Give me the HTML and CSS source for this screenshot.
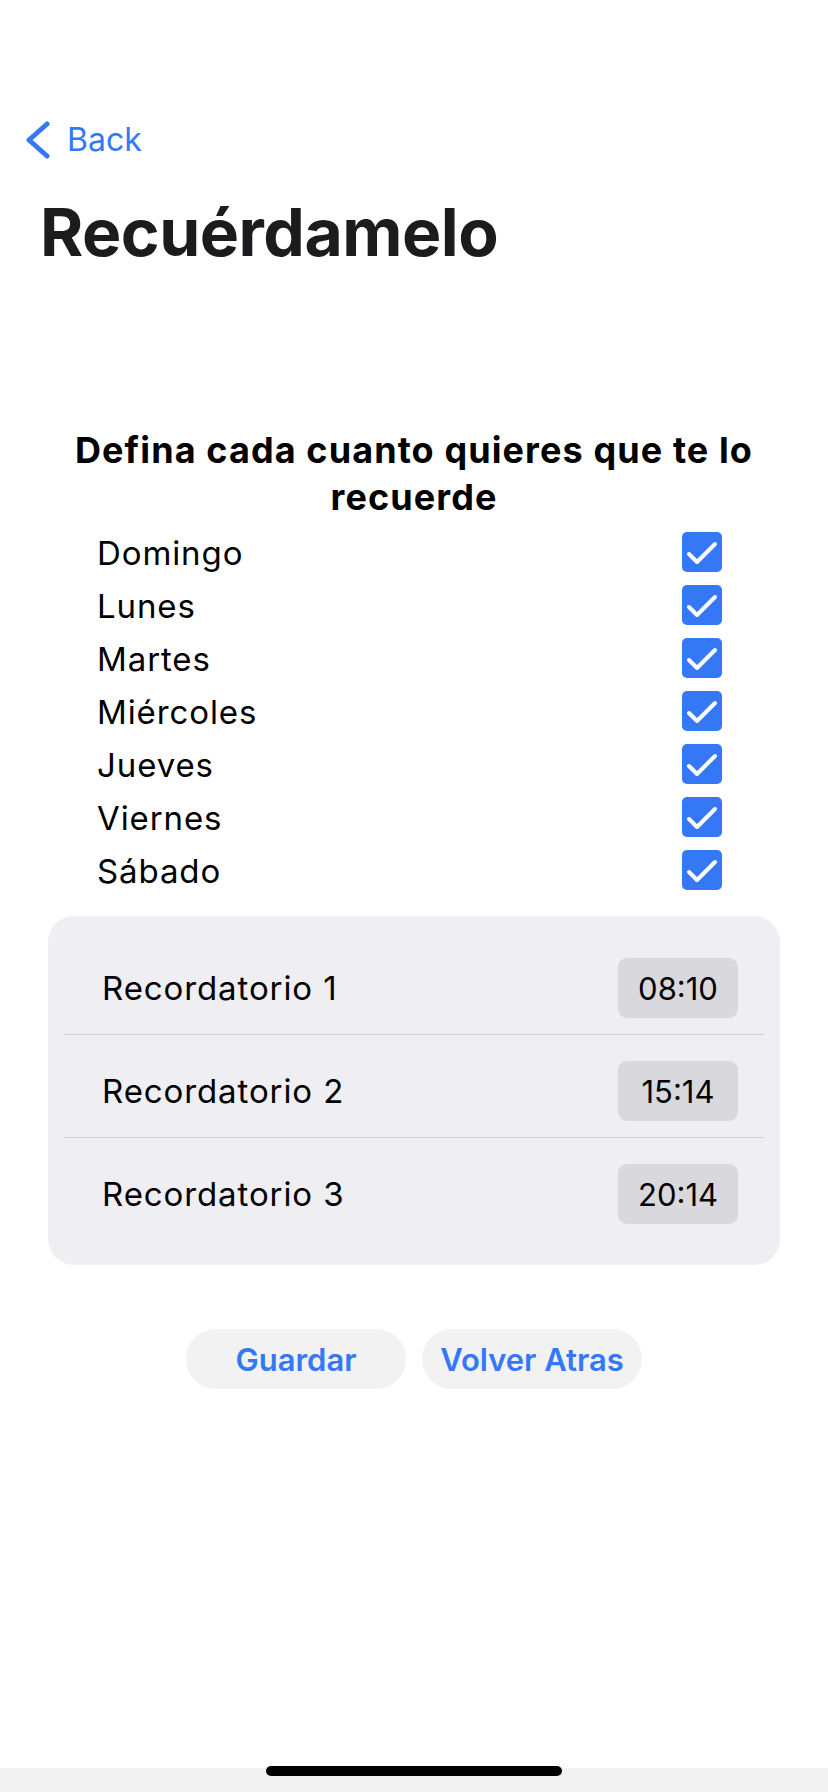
FILE: index.html
```html
<!DOCTYPE html>
<html lang="es">
<head>
<meta charset="utf-8">
<title>Recuérdamelo</title>
<link rel="stylesheet" href="styles.css">
</head>
<body>
<div class="screen">
  <nav class="nav">
    <svg class="chev" width="24" height="40" viewBox="0 0 24 40"><path d="M21 4 L3 20 L21 36" fill="none" stroke="#3478f6" stroke-width="5" stroke-linecap="round" stroke-linejoin="round"/></svg>
    <span class="back">Back</span>
  </nav>
  <h1 class="title">Recuérdamelo</h1>

  <h2 class="heading">Defina cada cuanto quieres que te lo recuerde</h2>

  <ul class="days">
    <li class="day"><span>Domingo</span><span class="check"><svg width="40" height="40" viewBox="0 0 40 40"><path d="M7 22 L15 30 L33 12" fill="none" stroke="#fff" stroke-width="4" stroke-linecap="round" stroke-linejoin="round"/></svg></span></li>
    <li class="day"><span>Lunes</span><span class="check"><svg width="40" height="40" viewBox="0 0 40 40"><path d="M7 22 L15 30 L33 12" fill="none" stroke="#fff" stroke-width="4" stroke-linecap="round" stroke-linejoin="round"/></svg></span></li>
    <li class="day"><span>Martes</span><span class="check"><svg width="40" height="40" viewBox="0 0 40 40"><path d="M7 22 L15 30 L33 12" fill="none" stroke="#fff" stroke-width="4" stroke-linecap="round" stroke-linejoin="round"/></svg></span></li>
    <li class="day"><span>Miércoles</span><span class="check"><svg width="40" height="40" viewBox="0 0 40 40"><path d="M7 22 L15 30 L33 12" fill="none" stroke="#fff" stroke-width="4" stroke-linecap="round" stroke-linejoin="round"/></svg></span></li>
    <li class="day"><span>Jueves</span><span class="check"><svg width="40" height="40" viewBox="0 0 40 40"><path d="M7 22 L15 30 L33 12" fill="none" stroke="#fff" stroke-width="4" stroke-linecap="round" stroke-linejoin="round"/></svg></span></li>
    <li class="day"><span>Viernes</span><span class="check"><svg width="40" height="40" viewBox="0 0 40 40"><path d="M7 22 L15 30 L33 12" fill="none" stroke="#fff" stroke-width="4" stroke-linecap="round" stroke-linejoin="round"/></svg></span></li>
    <li class="day"><span>Sábado</span><span class="check"><svg width="40" height="40" viewBox="0 0 40 40"><path d="M7 22 L15 30 L33 12" fill="none" stroke="#fff" stroke-width="4" stroke-linecap="round" stroke-linejoin="round"/></svg></span></li>
  </ul>

  <section class="card">
    <div class="row"><span class="label">Recordatorio 1</span><span class="time">08:10</span></div>
    <div class="sep"></div>
    <div class="row"><span class="label">Recordatorio 2</span><span class="time">15:14</span></div>
    <div class="sep"></div>
    <div class="row"><span class="label">Recordatorio 3</span><span class="time">20:14</span></div>
  </section>

  <div class="actions">
    <button class="btn">Guardar</button>
    <button class="btn">Volver Atras</button>
  </div>

  <footer class="home"><div class="indicator"></div></footer>
</div>
</body>
</html>
```
FILE: styles.css
```css
* { box-sizing: border-box; }
html, body { margin: 0; padding: 0; background: #fff; }
body { font-family: Inter, "Noto Sans", sans-serif; color: #000; }

.screen {
  min-height: 1792px;
  display: flex;
  flex-direction: column;
}

.nav {
  margin-top: 120px;
  height: 40px;
  padding-left: 26px;
  display: flex;
  align-items: center;
  gap: 17px;
}
.chev { display: block; }
.back {
  font-size: 32px;
  color: #3478f6;
  line-height: 40px;
}

.title {
  margin: 32px 0 0 0;
  padding-left: 40px;
  font-size: 66px;
  font-weight: 700;
  line-height: 80px;
  color: #1c1c1e;
  letter-spacing: -0.5px;
}

.heading {
  margin: 155px 0 0 0;
  padding: 0 30px;
  text-align: center;
  font-size: 36px;
  font-weight: 700;
  letter-spacing: 1.1px;
  line-height: 47px;
  color: #000;
}

.days {
  list-style: none;
  margin: 4px 106px 0 97px;
  padding: 0;
}
.day {
  height: 53px;
  display: flex;
  align-items: center;
  justify-content: space-between;
  font-size: 33px;
  letter-spacing: 0.9px;
}
.day span:first-child { position: relative; top: 1px; }
.check {
  width: 40px;
  height: 40px;
  border-radius: 5px;
  background: #3478f6;
  display: block;
}
.check svg { display: block; }

.card {
  margin: 20px 48px 0 48px;
  background: #efeef3;
  border-radius: 26px;
  padding: 16px 16px 25px 16px;
}
.row {
  height: 102px;
  padding: 26px 26px 16px 38px;
  display: flex;
  align-items: center;
  justify-content: space-between;
}
.label { font-size: 33px; letter-spacing: 0.9px; color: #000; }
.time {
  width: 120px;
  height: 60px;
  border-radius: 9px;
  background: #d8d8dd;
  display: flex;
  align-items: center;
  justify-content: center;
  font-size: 31px;
  color: #000;
}
.sep { height: 1px; background: #cfcfd4; }

.actions {
  margin-top: 64px;
  display: flex;
  justify-content: center;
  gap: 16px;
}
.btn {
  width: 220px;
  height: 60px;
  border: none;
  border-radius: 30px;
  background: #f2f2f2;
  color: #3478f6;
  font-family: Inter, "Noto Sans", sans-serif;
  font-size: 31px;
  font-weight: 600;
  padding: 0;
}

.home {
  margin-top: auto;
  height: 26px;
  background: linear-gradient(#fff 0, #fff 2px, #f2f2f2 2px);
}
.indicator {
  width: 296px;
  height: 10px;
  border-radius: 5px;
  background: #000;
  margin: 0 auto;
}
```
